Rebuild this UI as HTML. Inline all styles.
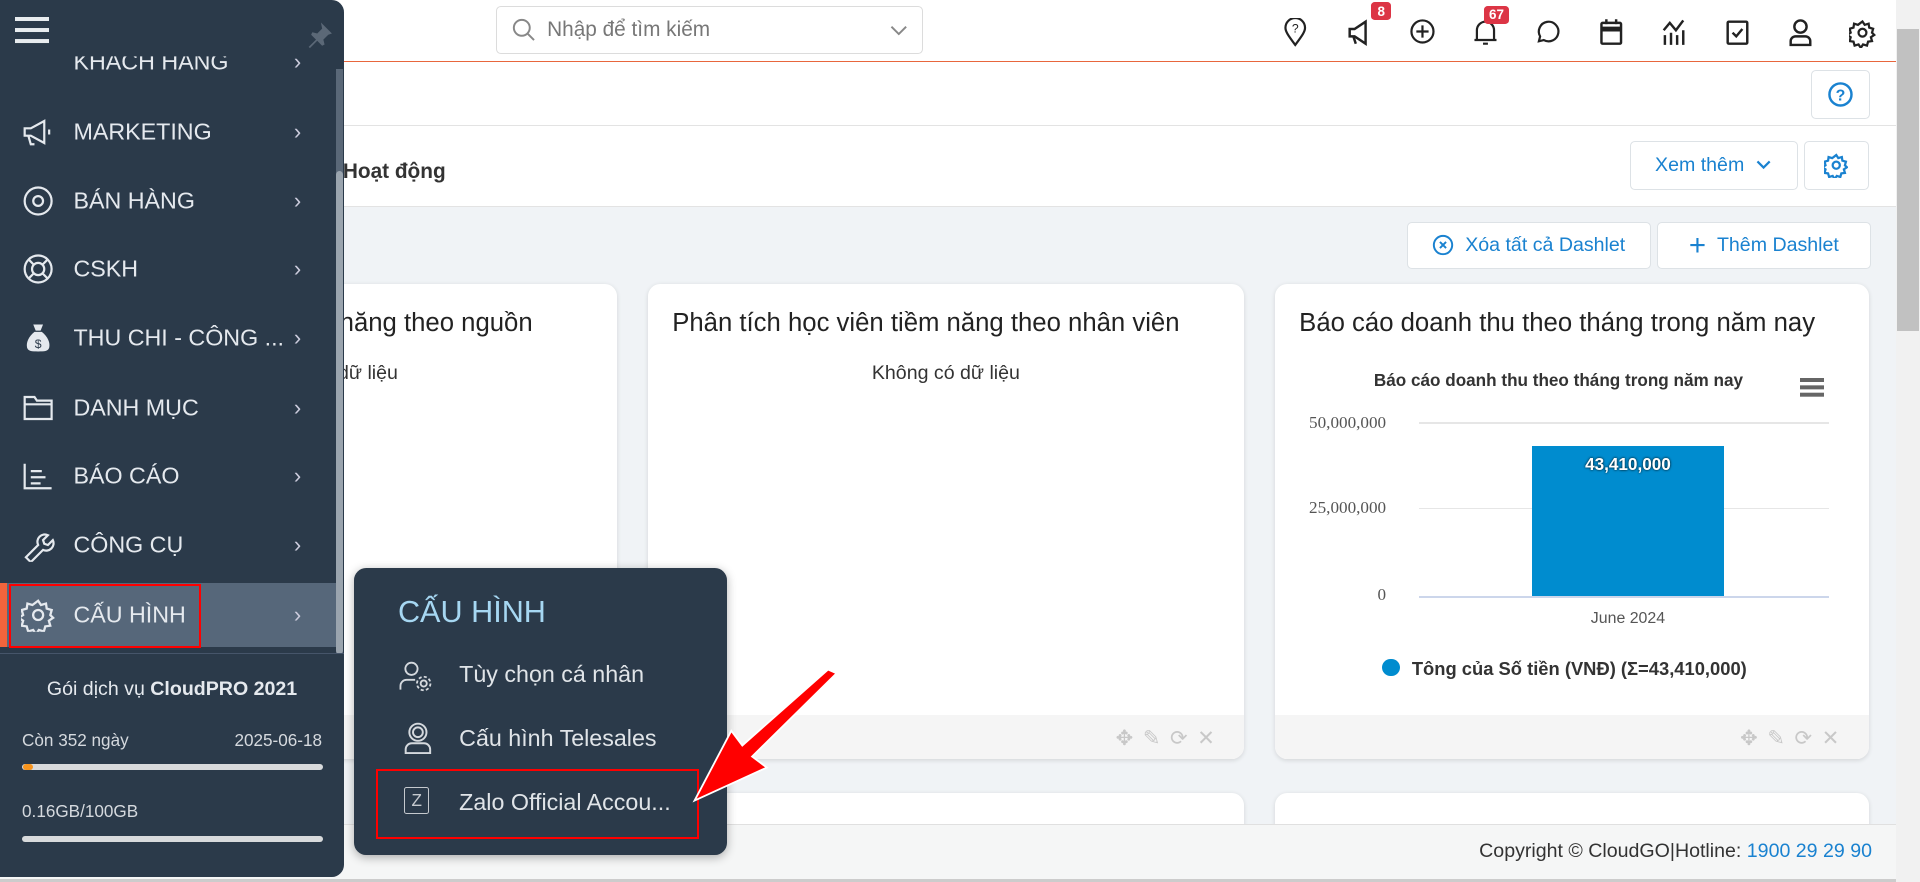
<!DOCTYPE html>
<html><head><meta charset="utf-8"><style>
html{zoom:1.22449;overflow:hidden}
body{margin:0;width:1568px;height:720px;overflow:hidden;position:relative;font-family:"Liberation Sans","Noto Sans CJK SC",sans-serif;background:#f0f3f6;color:#333}
.abs{position:absolute}
.btn{position:absolute;background:#fff;border:1px solid #dde2e6;border-radius:4px;color:#1a82d0;font-size:16px;display:flex;align-items:center;justify-content:center;box-sizing:border-box}
.card{position:absolute;background:#fff;border-radius:10px;box-shadow:0 1px 4px rgba(0,0,0,.12);overflow:hidden}
.card h3{margin:0;position:absolute;left:20px;top:20px;font-weight:normal;font-size:21px;color:#222;white-space:nowrap}
.cfoot{position:absolute;left:0;right:0;bottom:0;height:36px;background:#f5f5f5}
.tools{position:absolute;right:16px;top:9px;color:#c8c8c8;font-size:17px;letter-spacing:8px}
.mi{position:absolute;left:0;width:274px;height:56px;color:#e5e9ee;font-size:19px}
.mi span{position:absolute;left:60px;top:50%;transform:translateY(-50%)}
.mi i{position:absolute;left:240px;top:50%;transform:translateY(-50%);font-style:normal;font-size:18px;color:#ccd}
.mi svg{position:absolute;left:17px;top:50%;transform:translateY(-50%)}
.ti{position:absolute;top:15px}
</style></head><body>
<!-- top bar -->
<div class="abs" style="left:0;top:0;width:1548px;height:50px;background:#fff;border-bottom:1px solid #e8663d"></div>
<div class="abs" style="left:405px;top:5px;width:349px;height:39px;border:1px solid #dcdcdc;border-radius:4px;box-sizing:border-box;background:#fff">
<svg class="abs" style="left:12px;top:9px" width="20" height="20" viewBox="0 0 20 20" fill="none" stroke="#888" stroke-width="1.6"><circle cx="8" cy="8" r="6.5"/><path d="M13 13l5 5"/></svg>
<div class="abs" style="left:41px;top:9px;font-size:17px;color:#777">Nhập để tìm kiếm</div>
<svg class="abs" style="left:320px;top:13px" width="16" height="12" viewBox="0 0 16 12" fill="none" stroke="#888" stroke-width="1.6"><path d="M2 3l6 6 6-6"/></svg></div>
<svg class="ti" style="left:1048px" width="20" height="24" viewBox="0 0 20 24" fill="none" stroke="#222" stroke-width="1.8"><path d="M10 22C4 14 2 11 2 8a8 8 0 0116 0c0 3-2 6-8 14z"/><text x="10" y="12" font-size="10" text-anchor="middle" fill="#222" stroke="none" font-family="Liberation Sans">?</text></svg>
<svg class="ti" style="left:1099px" width="24" height="24" viewBox="0 0 24 24" fill="none" stroke="#222" stroke-width="2"><path d="M3 9h4l9-6v18l-9-6H3z M6 15l2 6"/></svg>
<div class="abs" style="left:1120px;top:2px;background:#dc3545;color:#fff;font-size:11px;font-weight:bold;padding:1px 5px;border-radius:3px">8</div>
<svg class="ti" style="left:1151px" width="22" height="22" viewBox="0 0 22 22" fill="none" stroke="#222" stroke-width="1.8"><circle cx="11" cy="11" r="9"/><path d="M11 6v10M6 11h10"/></svg>
<svg class="ti" style="left:1202px" width="22" height="24" viewBox="0 0 22 24" fill="none" stroke="#222" stroke-width="1.8"><path d="M4 18V10a7 7 0 0114 0v8zM2 18h18M9 21h4"/></svg>
<div class="abs" style="left:1212px;top:5px;background:#dc3545;color:#fff;font-size:11px;font-weight:bold;padding:1px 4px;border-radius:3px">67</div>
<svg class="ti" style="left:1253px" width="22" height="22" viewBox="0 0 22 22" fill="none" stroke="#222" stroke-width="1.8"><path d="M4 19l1-4a8 8 0 113 3z"/></svg>
<svg class="ti" style="left:1306px" width="20" height="24" viewBox="0 0 20 24" fill="none" stroke="#222" stroke-width="2"><rect x="2" y="4" width="16" height="17" rx="1"/><path d="M2 9h16" stroke-width="4"/><path d="M6 1v4M14 1v4"/></svg>
<svg class="ti" style="left:1356px" width="24" height="24" viewBox="0 0 24 24" fill="none" stroke="#222" stroke-width="2"><path d="M3 10l5-6 5 6 6-8M4 14v8M9 12v10M14 14v8M19 10v12"/></svg>
<svg class="ti" style="left:1408px" width="22" height="24" viewBox="0 0 22 24" fill="none" stroke="#222" stroke-width="2"><rect x="3" y="3" width="16" height="18" rx="1"/><path d="M7 12l3 3 5-6"/></svg>
<svg class="ti" style="left:1459px" width="22" height="24" viewBox="0 0 22 24" fill="none" stroke="#222" stroke-width="2"><circle cx="11" cy="7" r="5"/><path d="M3 22v-3a4 4 0 014-4h8a4 4 0 014 4v3z"/></svg>
<svg class="ti" style="left:1510px" width="22" height="24" viewBox="0 0 24 24" fill="none" stroke="#222" stroke-width="2"><circle cx="12" cy="12" r="3.5"/><path d="M12 2l2 3 3.5-1 .5 3.5 3.5 1-1 3.5 2 2-3 2 1 3.5-3.5.5-1 3.5-3.5-1-2 3-2-3-3.5 1-1-3.5-3.5-.5 1-3.5-3-2 3-2-1-3.5 3.5-1 .5-3.5 3.5 1z"/></svg>
<!-- page scrollbar -->
<div class="abs" style="left:1548px;top:0;width:20px;height:720px;background:#f1f1f1"></div>
<div class="abs" style="left:1549px;top:24px;width:18px;height:246px;background:#c1c1c1"></div>
<!-- row2/3 -->
<div class="abs" style="left:0;top:51px;width:1548px;height:51px;background:#fff;border-bottom:1px solid #e3e3e3"></div>
<div class="btn" style="left:1479px;top:57px;width:48px;height:40px"><svg width="22" height="22" viewBox="0 0 22 22" fill="none" stroke="#1a82d0" stroke-width="2"><circle cx="11" cy="11" r="9"/><text x="11" y="16" font-size="13" font-weight="bold" text-anchor="middle" fill="#1a82d0" stroke="none" font-family="Liberation Sans">?</text></svg></div>
<div class="abs" style="left:0;top:103px;width:1548px;height:65px;background:#fff;border-bottom:1px solid #e3e3e3"></div>
<div class="abs" style="left:280px;top:131px;font-size:17px;font-weight:bold;color:#333">Hoạt động</div>
<div class="btn" style="left:1331px;top:115px;width:137px;height:40px">Xem thêm&nbsp;&nbsp;<svg width="14" height="10" viewBox="0 0 14 10" fill="none" stroke="#1a82d0" stroke-width="1.8"><path d="M2 2l5 5 5-5"/></svg></div>
<div class="btn" style="left:1473px;top:115px;width:53px;height:40px"><svg width="20" height="20" viewBox="0 0 24 24" fill="none" stroke="#1a82d0" stroke-width="2.2"><circle cx="12" cy="12" r="3.5"/><path d="M12 2l2 3 3.5-1 .5 3.5 3.5 1-1 3.5 2 2-3 2 1 3.5-3.5.5-1 3.5-3.5-1-2 3-2-3-3.5 1-1-3.5-3.5-.5 1-3.5-3-2 3-2-1-3.5 3.5-1 .5-3.5 3.5 1z"/></svg></div>
<div class="btn" style="left:1149px;top:181px;width:199px;height:39px"><svg width="18" height="18" viewBox="0 0 18 18" fill="none" stroke="#1a82d0" stroke-width="1.6"><circle cx="9" cy="9" r="7.5"/><path d="M6.5 6.5l5 5M11.5 6.5l-5 5"/></svg>&nbsp;&nbsp;Xóa tất cả Dashlet</div>
<div class="btn" style="left:1353px;top:181px;width:175px;height:39px"><span style="font-size:24px;font-weight:300">+</span>&nbsp;&nbsp;Thêm Dashlet</div>
<!-- cards -->
<div class="card" style="left:100px;top:232px;width:404px;height:388px"><h3 style="left:auto;right:69px">Phân tích học viên tiềm năng theo nguồn</h3><div class="abs" style="right:179px;top:64px;font-size:16px">Không có dữ liệu</div><div class="cfoot"></div></div>
<div class="card" style="left:529px;top:232px;width:487px;height:388px"><h3>Phân tích học viên tiềm năng theo nhân viên</h3><div class="abs" style="left:0;right:0;text-align:center;top:64px;font-size:16px">Không có dữ liệu</div><div class="cfoot"><div class="tools">✥✎⟳✕</div></div></div>
<div class="card" style="left:1041px;top:232px;width:485px;height:388px"><h3>Báo cáo doanh thu theo tháng trong năm nay</h3>
<div class="abs" style="left:81px;top:70px;font-size:14px;font-weight:bold;color:#333">Báo cáo doanh thu theo tháng trong năm nay</div>
<div class="abs" style="left:429px;top:77px;width:20px;height:3px;background:#666;box-shadow:0 6px #666,0 12px #666"></div>
<div class="abs" style="left:0;width:91px;text-align:right;top:105px;font-size:14px;color:#555;font-family:'Liberation Serif',serif">50,000,000</div>
<div class="abs" style="left:0;width:91px;text-align:right;top:175px;font-size:14px;color:#555;font-family:'Liberation Serif',serif">25,000,000</div>
<div class="abs" style="left:0;width:91px;text-align:right;top:246px;font-size:14px;color:#555;font-family:'Liberation Serif',serif">0</div>
<div class="abs" style="left:118px;top:113px;width:335px;height:1px;background:#e6e6e6"></div>
<div class="abs" style="left:118px;top:183px;width:335px;height:1px;background:#e6e6e6"></div>
<div class="abs" style="left:118px;top:255px;width:335px;height:1px;background:#ccd6eb"></div>
<div class="abs" style="left:210px;top:132px;width:157px;height:123px;background:#008ccf"></div>
<div class="abs" style="left:210px;width:157px;text-align:center;top:139px;font-size:14px;font-weight:bold;color:#fff;text-shadow:0 0 2px #000">43,410,000</div>
<div class="abs" style="left:210px;width:157px;text-align:center;top:266px;font-size:13px;color:#555">June 2024</div>
<div class="abs" style="left:88px;top:306px;width:14px;height:14px;border-radius:50%;background:#008ccf"></div>
<div class="abs" style="left:112px;top:305px;font-size:15px;font-weight:bold;color:#333">Tông của Số tiền (VNĐ) (Σ=43,410,000)</div>
<div class="cfoot"><div class="tools">✥✎⟳✕</div></div></div>
<div class="card" style="left:529px;top:648px;width:487px;height:40px"></div>
<div class="card" style="left:1041px;top:648px;width:485px;height:40px"></div>
<!-- footer -->
<div class="abs" style="left:0;top:673px;width:1548px;height:47px;background:#f5f6f6;border-top:1px solid #e0e0e0"></div>
<div class="abs" style="left:1208px;top:686px;font-size:16px;color:#333">Copyright © CloudGO|Hotline: <span style="color:#1a82d0">1900 29 29 90</span></div>
<div class="abs" style="left:0;top:718px;width:1548px;height:2px;background:#ccc"></div>
<!-- sidebar -->
<div class="abs" style="left:0;top:0;width:281px;height:716px;background:#2b3a4a;border-radius:0 10px 10px 0;overflow:hidden">
<div class="abs" style="left:12px;top:14px;width:28px;height:3px;background:#e8ecef;box-shadow:0 9px #e8ecef,0 18px #e8ecef"></div>
<svg class="abs" style="left:249px;top:16px" width="24" height="24" viewBox="0 0 24 24"><path d="M13 2l9 9-3 1-4 4 1 4-2 1-4-4-6 6-1-1 6-6-4-4 1-2 4 1 4-4z" fill="#5b6877"/></svg>
<div class="mi" style="top:28px;height:46px;clip-path:inset(18px 0 0 0)"><span>KHÁCH HÀNG</span><i>›</i></div>
<div class="mi" style="top:80px"><svg width="28" height="28" viewBox="0 0 28 28" fill="none" stroke="#e5e9ee" stroke-width="1.8"><path d="M3 11h5l11-6v18l-11-6H3zM6 17l2 7h3"/><path d="M23 12v4"/></svg><span>MARKETING</span><i>›</i></div>
<div class="mi" style="top:136px"><svg width="28" height="28" viewBox="0 0 28 28" fill="none" stroke="#e5e9ee" stroke-width="1.8"><circle cx="14" cy="14" r="11"/><circle cx="14" cy="14" r="4"/></svg><span>BÁN HÀNG</span><i>›</i></div>
<div class="mi" style="top:192px"><svg width="28" height="28" viewBox="0 0 28 28" fill="none" stroke="#e5e9ee" stroke-width="1.8"><circle cx="14" cy="14" r="11"/><circle cx="14" cy="14" r="5"/><path d="M6 6l4 4M22 6l-4 4M6 22l4-4M22 22l-4-4"/></svg><span>CSKH</span><i>›</i></div>
<div class="mi" style="top:248px"><svg width="28" height="28" viewBox="0 0 28 28"><path d="M10 3h8l-2 5h-4z" fill="#e5e9ee"/><path d="M11 9h6c5 4 7 9 6 13-1 3-4 3-9 3s-8 0-9-3c-1-4 1-9 6-13z" fill="#e5e9ee"/><text x="14" y="22" font-size="10" text-anchor="middle" fill="#2b3a4a" font-family="Liberation Sans">$</text></svg><span>THU CHI - CÔNG ...</span><i>›</i></div>
<div class="mi" style="top:305px"><svg width="28" height="28" viewBox="0 0 28 28" fill="none" stroke="#e5e9ee" stroke-width="1.8"><path d="M3 5h8l2 3h12v15H3z M3 11h22"/></svg><span>DANH MỤC</span><i>›</i></div>
<div class="mi" style="top:361px"><svg width="28" height="28" viewBox="0 0 28 28" fill="none" stroke="#e5e9ee" stroke-width="1.8"><path d="M3 4v20h22M8 10h9M8 15h12M8 20h8"/></svg><span>BÁO CÁO</span><i>›</i></div>
<div class="mi" style="top:417px"><svg width="28" height="28" viewBox="0 0 28 28" fill="none" stroke="#e5e9ee" stroke-width="1.8"><path d="M4 24l10-10a6 6 0 018-8l-4 4 1 3 3 1 4-4a6 6 0 01-8 8L8 28z"/></svg><span>CÔNG CỤ</span><i>›</i></div>
<div class="mi" style="top:476px;height:52px;background:#56677a"><div class="abs" style="left:0;top:0;width:6px;height:52px;background:#f0643c"></div><svg width="28" height="28" viewBox="0 0 24 24" fill="none" stroke="#e5e9ee" stroke-width="1.6"><circle cx="12" cy="12" r="3.5"/><path d="M12 2l2 3 3.5-1 .5 3.5 3.5 1-1 3.5 2 2-3 2 1 3.5-3.5.5-1 3.5-3.5-1-2 3-2-3-3.5 1-1-3.5-3.5-.5 1-3.5-3-2 3-2-1-3.5 3.5-1 .5-3.5 3.5 1z"/></svg><span>CẤU HÌNH</span><i>›</i></div>
<div class="abs" style="left:7px;top:477px;width:157px;height:52px;border:2px solid #f00;box-sizing:border-box"></div>
<div class="abs" style="left:274px;top:56px;width:6px;height:478px;background:#5a6878"></div>
<div class="abs" style="left:274px;top:140px;width:6px;height:394px;background:#9aa4ae;border-radius:3px"></div>
<div class="abs" style="left:0;top:533px;width:281px;height:1px;background:#46556a"></div>
<div class="abs" style="left:0;width:281px;text-align:center;top:554px;font-size:16px;color:#e5e9ee">Gói dịch vụ <b>CloudPRO 2021</b></div>
<div class="abs" style="left:18px;top:596px;font-size:14px;color:#d5d9de">Còn 352 ngày</div>
<div class="abs" style="right:18px;top:596px;font-size:14px;color:#d5d9de">2025-06-18</div>
<div class="abs" style="left:18px;top:624px;width:246px;height:5px;border-radius:3px;background:#d8dadc"></div>
<div class="abs" style="left:19px;top:624px;width:8px;height:5px;border-radius:3px;background:#f7941d"></div>
<div class="abs" style="left:18px;top:654px;font-size:14px;color:#d5d9de">0.16GB/100GB</div>
<div class="abs" style="left:18px;top:683px;width:246px;height:5px;border-radius:3px;background:#d8dadc"></div>
</div>
<!-- popup -->
<div class="abs" style="left:289px;top:464px;width:305px;height:234px;background:#2b3a4a;border-radius:10px;box-shadow:0 2px 8px rgba(0,0,0,.3)">
<div class="abs" style="left:36px;top:22px;font-size:25px;color:#a6d7f2">CẤU HÌNH</div>
<svg class="abs" style="left:36px;top:74px" width="30" height="28" viewBox="0 0 30 28" fill="none" stroke="#d5d9de" stroke-width="1.5"><circle cx="11" cy="8" r="5"/><path d="M2 25v-3a5 5 0 015-5h7"/><circle cx="21" cy="20" r="2.5"/><circle cx="21" cy="20" r="5.5" stroke-dasharray="2.5 1.8"/></svg>
<div class="abs" style="left:86px;top:76px;font-size:19px;color:#e0e4e8">Tùy chọn cá nhân</div>
<svg class="abs" style="left:39px;top:124px" width="26" height="28" viewBox="0 0 26 28" fill="none" stroke="#d5d9de" stroke-width="1.6"><circle cx="13" cy="10" r="7"/><circle cx="13" cy="10" r="4"/><path d="M3 27v-3a5 5 0 015-5h10a5 5 0 015 5v3z"/></svg>
<div class="abs" style="left:86px;top:128px;font-size:19px;color:#e0e4e8">Cấu hình Telesales</div>
<div class="abs" style="left:41px;top:179px;width:19px;height:20px;border:1.5px solid #c5c9ce;border-radius:2px;color:#c5c9ce;font-size:14px;text-align:center;line-height:20px">Z</div>
<div class="abs" style="left:86px;top:180px;font-size:19px;color:#e0e4e8">Zalo Official Accou...</div>
</div>
<div class="abs" style="left:307px;top:628px;width:264px;height:57px;border:2px solid #f00;box-sizing:border-box"></div>
<!-- arrow -->
<svg class="abs" style="left:560px;top:540px" width="130" height="120" viewBox="0 0 130 120"><path d="M123 10L54 78l12 9-59 27 30-57 9 12 70-62z" fill="#f00" stroke="#fff" stroke-width="1.5"/></svg>
</body></html>
